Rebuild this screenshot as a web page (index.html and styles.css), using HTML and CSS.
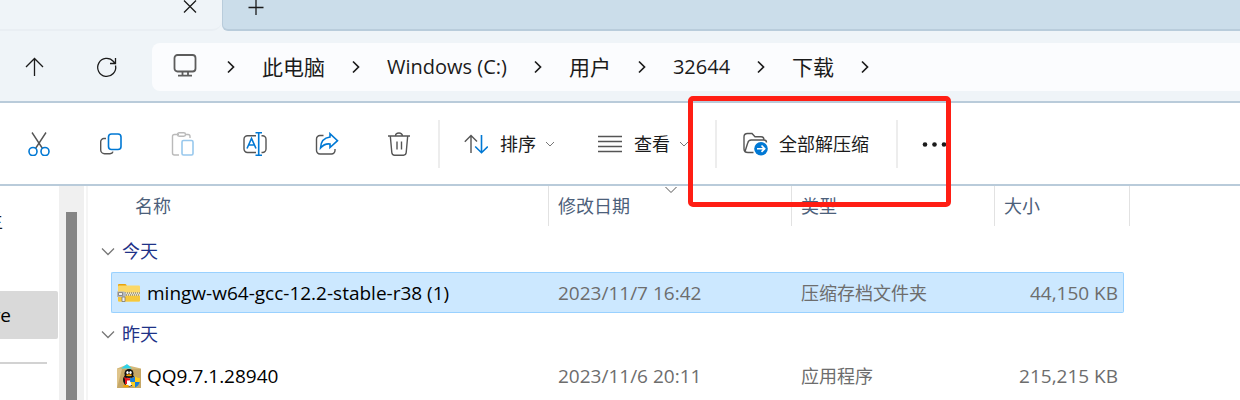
FILE: index.html
```html
<!DOCTYPE html>
<html lang="zh-CN">
<head>
<meta charset="utf-8">
<title>下载</title>
<link rel="stylesheet" href="styles.css">
</head>
<body>
<div class="window">
  <header class="tabs">
    <div class="tab">
      <button class="icon-btn" aria-label="关闭标签页"><svg width="14" height="14" viewBox="0 0 14 14"><path d="M1 0.5 13 12.5M13 0.5 1 12.5" class="ink"/></svg></button>
    </div>
    <div class="strip">
      <button class="icon-btn" aria-label="新建标签页"><svg width="16" height="16" viewBox="0 0 16 16"><path d="M.5 7.5h15M8 0v15" class="ink"/></svg></button>
    </div>
  </header>

  <nav class="navbar">
    <button class="icon-btn" aria-label="向上"><svg width="24" height="24" viewBox="0 0 24 24"><path d="M12.500 21V3.500M4 12l8.500-8.500L21 12" class="ink"/></svg></button>
    <button class="icon-btn" aria-label="刷新"><svg width="24" height="24" viewBox="0 0 24 24"><path d="M20.500 10.500A9 9 0 1 1 18.500 6.500L20 8.500M20.500 3v5.500H15" class="ink"/></svg></button>
    <div class="address">
      <svg width="27" height="26" viewBox="0 0 27 26" class="pc"><rect x="1.500" y="1" width="21" height="16.500" rx="3"/><path d="M9.500 17.500v4M15 17.500v4M5 21.700h14"/></svg>
      <svg class="chev" width="8" height="14" viewBox="0 0 8 14"><path d="M1 1.500 6.500 7 1 12.500"/></svg>
      <a href="#pc">此电脑</a>
      <svg class="chev" width="8" height="14" viewBox="0 0 8 14"><path d="M1 1.500 6.500 7 1 12.500"/></svg>
      <a class="latin" href="#c">Windows (C:)</a>
      <svg class="chev" width="8" height="14" viewBox="0 0 8 14"><path d="M1 1.500 6.500 7 1 12.500"/></svg>
      <a href="#users">用户</a>
      <svg class="chev" width="8" height="14" viewBox="0 0 8 14"><path d="M1 1.500 6.500 7 1 12.500"/></svg>
      <a class="latin" href="#user">32644</a>
      <svg class="chev" width="8" height="14" viewBox="0 0 8 14"><path d="M1 1.500 6.500 7 1 12.500"/></svg>
      <a href="#downloads">下载</a>
      <svg class="chev" width="8" height="14" viewBox="0 0 8 14"><path d="M1 1.500 6.500 7 1 12.500"/></svg>
    </div>
  </nav>

  <div class="toolbar">
    <button class="tool" aria-label="剪切"><svg width="24" height="24" viewBox="0 0 24 24"><path class="g" d="M5 .5 15.500 16.500M19 .5 8.500 16.500"/><circle class="b" cx="6" cy="19.500" r="4"/><circle class="b" cx="18" cy="19.500" r="4"/></svg></button>
    <button class="tool" aria-label="复制"><svg width="24" height="24" viewBox="0 0 24 24"><path class="g" d="M7 6.500H5A3.200 3.200 0 0 0 1.700 9.700V18A3.800 3.800 0 0 0 5.500 21.700H11q2.500 0 3-2"/><rect class="b" x="9.500" y="2" width="12.500" height="15.500" rx="3"/></svg></button>
    <button class="tool off" aria-label="粘贴" disabled><svg width="24" height="24" viewBox="0 0 24 24"><path class="g" d="M8 2.500H3.500Q1.500 2.500 1.500 4.500V21q0 2 2 2H8M14 2.500h3q2 0 2 2V6"/><rect class="g" x="6.500" y=".8" width="8" height="3.500" rx="1.700"/><rect class="b" x="11" y="8.500" width="11" height="14.500" rx="1.500"/></svg></button>
    <button class="tool" aria-label="重命名"><svg width="24" height="24" viewBox="0 0 24 24"><path class="g" d="M13 3.700H4.500A3.500 3.500 0 0 0 1 7.200V17a3.500 3.500 0 0 0 3.500 3.500H13M18.500 3.700h1A3.500 3.500 0 0 1 23 7.200V17a3.500 3.500 0 0 1-3.500 3.500h-1"/><path class="b" d="m4 16.500 4.500-10 4.500 10M5.700 13h5.600M12.500.7h6.500M12.500 23.300H19M15.700.7v22.600"/></svg></button>
    <button class="tool" aria-label="共享"><svg width="24" height="24" viewBox="0 0 24 24"><path class="g" d="M8.500 3.500H5A3.500 3.500 0 0 0 1.500 7v11.500A3.500 3.500 0 0 0 5 22h11.500a3.500 3.500 0 0 0 3.500-3.500V17"/><path class="b" d="M15 5V1.700l7.500 7L15 15.500V12q-5.500-.7-9.500 4Q6 6 15 5z"/></svg></button>
    <button class="tool" aria-label="删除"><svg width="24" height="24" viewBox="0 0 24 24"><path class="g" d="M1 4h22M8.500 4a3.500 3 0 0 1 7 0M3.300 4l1.500 16.500q.3 2.700 2.700 2.700h9q2.400 0 2.700-2.700L20.700 4M10 9.500v8M14.500 9.500v8"/></svg></button>
    <span class="sep"></span>
    <button class="menu"><svg width="24" height="24" viewBox="0 0 24 24"><path class="g" d="M7 21V3.500M.8 9.700 7 3.500l6 6"/><path class="b" d="M17.500 3v17.500M11.200 14.500l6.300 6.200 6.300-6.200"/></svg><span>排序</span><svg class="caret" width="12" height="12" viewBox="0 0 12 12"><path d="m2 4 4 4 4-4"/></svg></button>
    <button class="menu"><svg width="24" height="24" viewBox="0 0 24 24"><path class="g" d="M0 4.500h24M0 9.500h24M0 14.500h24M0 19.500h24"/></svg><span>查看</span><svg class="caret" width="12" height="12" viewBox="0 0 12 12"><path d="m2 4 4 4 4-4"/></svg></button>
    <span class="sep"></span>
    <button class="menu extract"><svg width="26" height="26" viewBox="0 0 26 26"><path class="g" d="M10.500 21.500H5q-4 0-4-3.500V6q0-3.500 3.500-3.500H9L12 5.700h6q3 0 3 3.300M2 20.500 4.700 12q.8-3 3.500-3H21q2.500 0 2.500 2.500"/><circle cx="18" cy="17.700" r="6.800" fill="#0078d4"/><path d="M14 17.700h7.500M18.500 14.500l3.200 3.200-3.200 3.200" fill="none" stroke="#fff" stroke-width="1.600"/></svg><span>全部解压缩</span></button>
    <span class="sep"></span>
    <button class="menu" aria-label="更多"><svg width="26" height="24" viewBox="0 0 26 24"><g fill="#1b1b1b"><circle cx="3" cy="12.500" r="2.300"/><circle cx="12.500" cy="12.500" r="2.300"/><circle cx="22" cy="12.500" r="2.300"/></g></svg></button>
  </div>

  <div class="content">
    <aside class="sidebar">
      <a class="side-item" href="#home">主</a>
      <a class="side-item current" href="#drive">ve</a>
      <hr>
    </aside>
    <div class="scroll"><div class="thumb"></div></div>
    <main class="files">
      <table>
        <colgroup><col class="c-gutter"><col class="c-name"><col class="c-date"><col class="c-type"><col class="c-size"><col class="c-end"></colgroup>
        <thead>
          <tr><th></th><th class="h-name">名称</th><th>修改日期<svg class="sorted" width="14" height="8" viewBox="0 0 14 8"><path d="m1.500 1 5.500 5.500L12.500 1"/></svg></th><th>类型</th><th class="h-size">大小</th><th class="h-end"></th></tr>
        </thead>
        <tbody>
          <tr class="group"><th colspan="6"><button><svg width="14" height="9" viewBox="0 0 14 9"><path d="m1 1.500 6 6 6-6"/></svg>今天</button></th></tr>
          <tr class="row selected">
            <td></td>
            <td class="name"><div class="file"><svg width="24" height="24" viewBox="0 0 24 24"><path d="M1 7V4q0-1 1-1h6q1 0 1.500 1L10 7z" fill="#e8a30c"/><rect x="1" y="4.500" width="22" height="16" rx="1" fill="#fbd867"/><path d="M1 15h22v4.500q0 1-1 1H2q-1 0-1-1z" fill="#f5c83c"/><path d="M7 11.500h16v3H7z" fill="#e8e2c8"/><path d="M8 12h15M9 14h14" stroke="#6f6548" stroke-dasharray="1 1"/><path d="M0 10.500h7l2 1.500v3l-2 1H0z" fill="#b4b9bd"/><path d="M1.500 11.500h4v3h-4zM5 16h3v4.500H5z" fill="#eee" stroke="#777" stroke-width=".8"/></svg>mingw-w64-gcc-12.2-stable-r38 (1)</div></td>
            <td>2023/11/7 16:42</td><td class="type">压缩存档文件夹</td><td class="size">44,150 KB</td><td></td>
          </tr>
          <tr class="group"><th colspan="6"><button><svg width="14" height="9" viewBox="0 0 14 9"><path d="m1 1.500 6 6 6-6"/></svg>昨天</button></th></tr>
          <tr class="row">
            <td></td>
            <td class="name"><div class="file"><svg width="24" height="24" viewBox="0 0 24 24"><path d="M0 4.500 9 1l15 3.500V24H0z" fill="#d4b878"/><path d="M4 4.500 10 0l5 4.500z" fill="#2fd3ea"/><path d="M0 5h24v19H0z" fill="#c6a867"/><path d="M0 5h5L0 24z" fill="#dfc48a"/><ellipse cx="12" cy="16" rx="6" ry="6.500" fill="#111"/><ellipse cx="12" cy="17.500" rx="4" ry="4.500" fill="#fff"/><circle cx="12" cy="9.500" r="4.500" fill="#111"/><ellipse cx="10.500" cy="8.500" rx="1.200" ry="1.500" fill="#fff"/><ellipse cx="13.500" cy="8.500" rx="1.200" ry="1.500" fill="#fff"/><ellipse cx="12" cy="11.300" rx="3" ry="1" fill="#f5a300"/><path d="M7 13q5 2.500 10 0v2q-4 2-7 1.500V20H8v-4z" fill="#e5141e"/><ellipse cx="9" cy="22" rx="3" ry="1.200" fill="#f5a300"/><path d="M18 12.500q2.500 1.700 5 1.700 0 7-5 9.300-5-2.300-5-9.300 2.500 0 5-1.700z" fill="#ffcf1c"/><path d="M18 12.500v5.500h-4.700q-.3-2-.3-3.800 2.500 0 5-1.700zM18 18h4.700q-1 4-4.700 5.500z" fill="#1b7fd8"/></svg>QQ9.7.1.28940</div></td>
            <td>2023/11/6 20:11</td><td class="type">应用程序</td><td class="size">215,215 KB</td><td></td>
          </tr>
        </tbody>
      </table>
    </main>
  </div>
  <div class="highlight"></div>
</div>
</body>
</html>
```
FILE: styles.css
```css
* { box-sizing: border-box; }
body {
  margin: 0;
  background: #fff;
  color: #1b1b1b;
  font: 18px/24px "Open Sans", "Noto Sans CJK SC", sans-serif;
}
button { font: inherit; color: inherit; border: 0; background: none; padding: 0; }
a { color: inherit; text-decoration: none; }
svg { display: block; flex: none; fill: none; }

.window { position: relative; height: 100vh; overflow: hidden; display: flex; flex-direction: column; }
.ink { stroke: #1b1b1b; stroke-width: 1.3; }

.tabs { display: flex; flex: none; height: 31px; background: #eff4f8; }
.tab {
  width: 222px;
  padding-right: 25px;
  display: flex;
  justify-content: flex-end;
  align-items: flex-start;
  border-bottom: 2px solid #e9eef3;
  border-bottom-right-radius: 10px;
}
.strip {
  flex: 1;
  padding-left: 25px;
  display: flex;
  align-items: flex-start;
  background: #cbddea;
  border-bottom: 2px solid #b9ccdb;
  border-left: 1px solid #b9ccdb;
  border-bottom-left-radius: 6px;
}

.navbar {
  display: flex;
  flex: none;
  align-items: center;
  gap: 49px;
  height: 72px;
  padding-top: 2px;
  padding-left: 22px;
  background: #eff4f8;
  border-bottom: 2px solid #b9cbda;
}
.address {
  flex: 1;
  display: flex;
  align-items: center;
  gap: 27px;
  height: 48px;
  margin-left: -16px;
  padding-left: 21px;
  background: #fbfcfe;
  border-radius: 8px 0 0 8px;
  font-size: 21px;
}
.address a { white-space: nowrap; }
.address .latin { font-size: 20px; }
.pc { stroke: #5c5c5c; stroke-width: 1.8; }
.chev { stroke: #1b1b1b; stroke-width: 1.7; }

.toolbar {
  display: flex;
  flex: none;
  align-items: center;
  height: 83px;
  padding-left: 3px;
  border-bottom: 2px solid #b9cbda;
}
.tool { width: 72px; height: 48px; display: grid; place-items: center; }
.menu { display: flex; align-items: center; height: 48px; padding: 0 22px 0 20px; gap: 12px; }
.menu.extract { padding: 0 24px 0 22px; gap: 10px; }
.menu .caret { margin-left: -4px; }
.caret { stroke: #777; stroke-width: 1; }
.sep { width: 2px; height: 48px; margin: 0 4px 0 3px; background: #ededed; }
.g { stroke: #555; stroke-width: 1.4; }
.b { stroke: #0078d4; stroke-width: 1.6; }
.off { opacity: .4; }

.content { flex: 1; display: flex; min-height: 0; }
.sidebar { width: 59px; flex: none; overflow: hidden; padding-top: 11px; }
.side-item {
  display: flex;
  align-items: center;
  justify-content: flex-end;
  width: 58px;
  height: 48px;
  padding-right: 55px;
  margin-bottom: 46px;
}
.side-item.current { padding-right: 47px; margin-bottom: 23px; background: #d9d9d9; border-radius: 0 2px 2px 0; font-size: 19px; color: #000; }
.sidebar hr { width: 47px; height: 2px; margin: 0; border: 0; background: #d2d2d2; }
.scroll { width: 25px; flex: none; padding: 26px 7px 0; background: #f0f0f0; }
.thumb { height: 100%; background: #858585; }

.files { flex: 1; margin-left: 2px; border-left: 2px solid #f5f5f5; }
table { table-layout: fixed; width: 1042px; border-collapse: separate; border-spacing: 0; }
.c-gutter { width: 23px; }
.c-name { width: 438px; }
.c-date { width: 243px; }
.c-type { width: 203px; }
.c-size { width: 129px; }
.c-end { width: 6px; }
th, td { padding: 0 0 0 9px; text-align: left; font-weight: 400; white-space: nowrap; }
thead th { position: relative; height: 40px; color: #4c607a; border-right: 1px solid #e2e2e2; }
thead th:first-child { border: 0; padding: 0; }
thead .h-name { padding-left: 24px; }
thead .h-size { border: 0; }
.h-end { padding: 0; }
.sorted { position: absolute; top: 0; left: 50%; margin-left: -6px; stroke: #555; }
.group th { height: 42px; padding-left: 13px; color: #1e3287; }
.group:first-child th { height: 46px; padding-top: 4px; }
.group button { display: flex; align-items: center; gap: 7px; }
.group svg { stroke: #777; stroke-width: 1.3; }
.row td { height: 41px; color: #6d6d6d; border: solid transparent; border-width: 1px 0; font-size: 19px; }
.row .type { font-size: 18px; }
.row td:first-child, .row td:last-child { padding: 0; }
.row .name { padding-left: 5px; border-left-width: 1px; color: #000; }
.row .size { padding: 0 5px 0 0; border-right-width: 1px; text-align: right; }
.file { display: flex; align-items: center; gap: 6px; }
.selected .name, .selected .name ~ td:not(:last-child) { background: #cce8ff; border-color: #99d1ff; }
.selected .name { border-radius: 2px 0 0 2px; }
.selected .size { border-radius: 0 2px 2px 0; }

.highlight {
  position: absolute;
  left: 688px;
  top: 96px;
  width: 263px;
  height: 111px;
  border: 5px solid #ff1e14;
  border-radius: 5px;
  pointer-events: none;
}
```
